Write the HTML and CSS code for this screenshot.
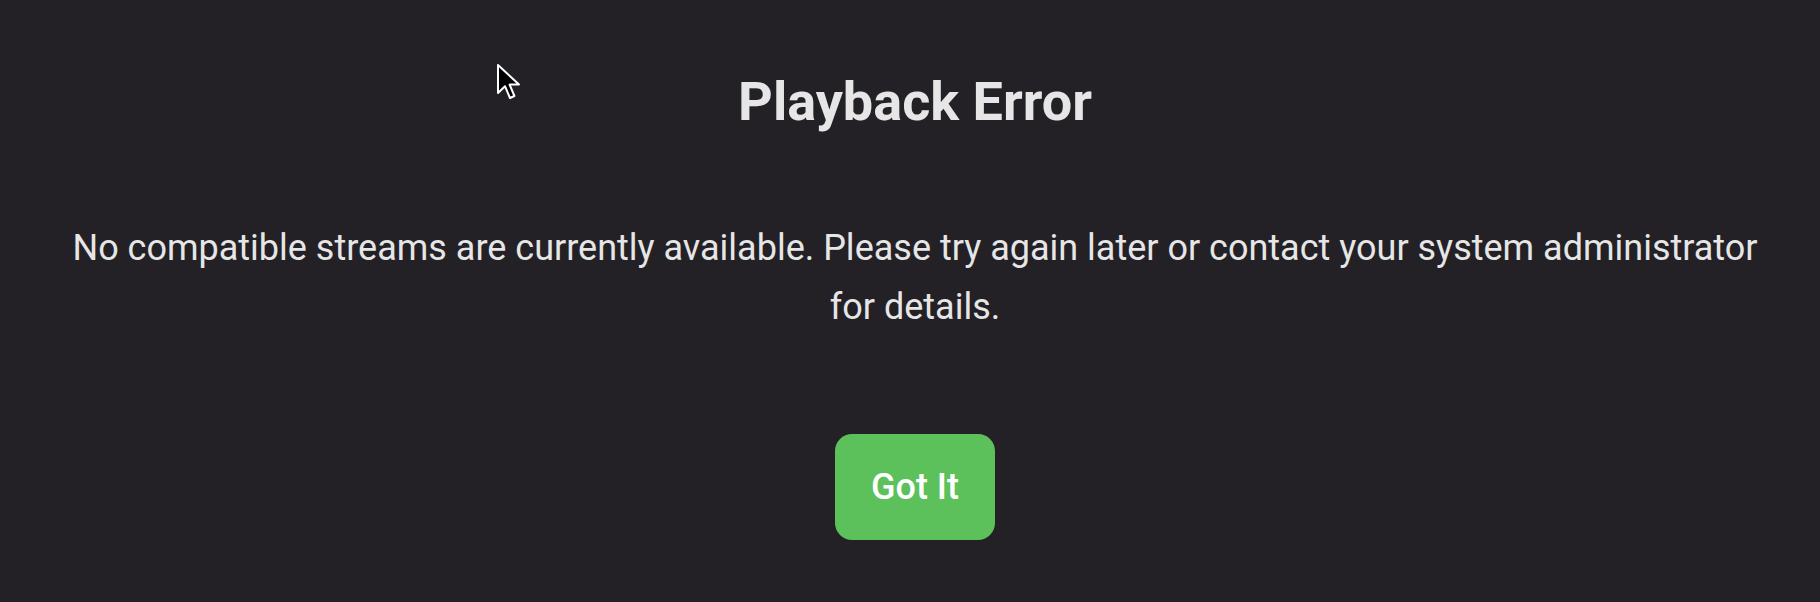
FILE: index.html
```html
<!DOCTYPE html>
<html lang="en">
<head>
    <meta charset="UTF-8">
    <meta name="viewport" content="width=device-width, initial-scale=1.0">
    <title>Playback Error</title>
    <link rel="stylesheet" href="styles.css">
</head>
<body>
    <div class="dialog">
        <h1 class="dialog-title">Playback Error</h1>
        <p class="dialog-text">No compatible streams are currently available. Please try again later or contact your system administrator for details.</p>
        <div class="dialog-buttons">
            <button class="btn-ok" type="button">Got It</button>
        </div>
    </div>

    <!-- mouse pointer -->
    <svg class="cursor" width="26" height="38" viewBox="0 0 13 19">
        <path d="M1 1 L1 15 L4.5 11.6 L7 17.5 L9.2 16.5 L6.8 10.8 L11.5 10.8 Z" fill="#000" stroke="#fff" stroke-width="1" stroke-linejoin="round"/>
    </svg>
</body>
</html>
```

FILE: styles.css
```css
/* Reset */
* {
    margin: 0;
    padding: 0;
    box-sizing: border-box;
}

html, body {
    height: 100%;
}

body {
    font-family: Roboto, "Noto Sans", sans-serif;
    background-color: #232126;
    color: #e6e6e6;
    overflow: hidden;
}

/* Dialog */
.dialog {
    display: flex;
    flex-direction: column;
    align-items: center;
    padding: 70px 55px 0 65px;
    text-align: center;
}

.dialog-title {
    font-size: 54px;
    font-weight: 700;
    line-height: 1.2;
    margin-bottom: 84px;
}

.dialog-text {
    font-size: 36px;
    line-height: 1.65;
    margin-bottom: 96px;
}

.dialog-buttons {
    display: flex;
    justify-content: center;
}

.btn-ok {
    font-family: inherit;
    font-size: 36px;
    font-weight: 500;
    color: #fff;
    background-color: #5cc15a;
    border: none;
    border-radius: 17px;
    width: 160px;
    height: 106px;
    cursor: pointer;
}

/* Pointer overlay */
.cursor {
    position: absolute;
    left: 496px;
    top: 63px;
}
```
